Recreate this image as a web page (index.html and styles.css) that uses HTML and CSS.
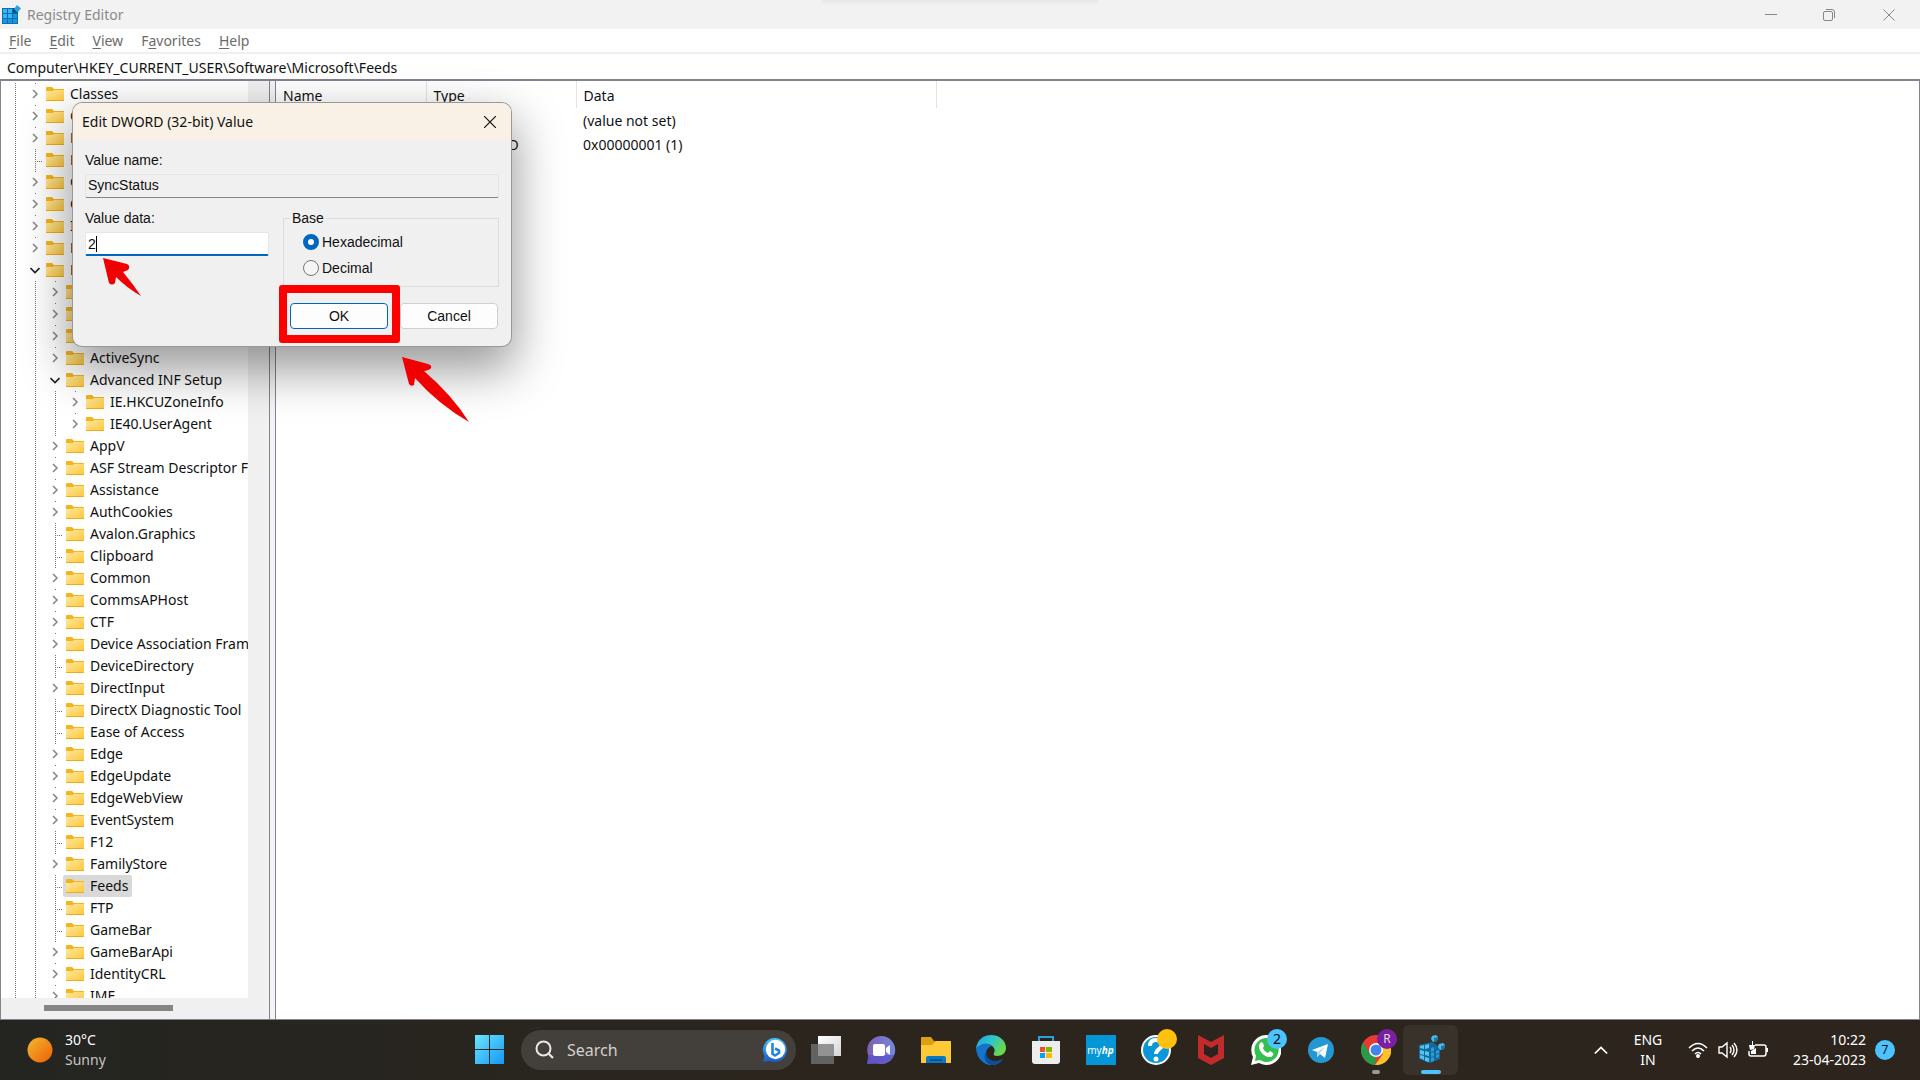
FILE: index.html
```html
<!DOCTYPE html>
<html lang="en">
<head>
<meta charset="utf-8">
<title>Registry Editor</title>
<link rel="stylesheet" href="styles.css">
</head>
<body>
<svg class="defs" aria-hidden="true">
  <defs>
    <linearGradient id="folder-fill" x1="0" y1="0" x2="1" y2="1"><stop offset="0" stop-color="#ffe9a2"/><stop offset="1" stop-color="#fdc638"/></linearGradient>
    <symbol id="folder" viewBox="0 0 18 14"><path d="M0 1a1 1 0 0 1 1-1h5l2 2h10v3H0z" fill="#f5b41c"/><path d="M0 4h7l1-1h10v11H0z" fill="url(#folder-fill)"/><path d="M0 13h18v1H0z" fill="#f0ac18"/></symbol>
    <symbol id="closed" viewBox="0 0 10 10"><path d="M3 1l4 4-4 4" fill="none" stroke="#858585" stroke-width="1.5"/></symbol>
    <symbol id="open" viewBox="0 0 10 10"><path d="M.5 3L5 7.500 9.500 3" fill="none" stroke="#222" stroke-width="1.600"/></symbol>
  </defs>
</svg>

<div class="screen">
<main class="window">
  <header class="titlebar">
    <svg class="app-icon" viewBox="0 0 20 20"><path d="M0 3h16v16H0z" fill="#0a6fb8"/><path d="M1 4h4v4H1zM6 4h4v4H6zM1 9h4v4H1zM6 9h4v4H6z" fill="#39b5ec"/><path d="M11 9h4v4h-4zM1 14h4v4H1zM6 14h4v4H6zM11 14h4v4h-4z" fill="#1e95d8"/><path d="M11 3h5v5h-5z" fill="#0b4f8a"/><path d="M15 0l4 3.500-3.500 4L12 4z" fill="#2aa2e0"/></svg>
    <h1>Registry Editor</h1>
    <div class="caption-buttons">
      <button aria-label="Minimize"><svg viewBox="0 0 12 12"><path d="M0 5.500h12" /></svg></button>
      <button aria-label="Restore"><svg viewBox="0 0 12 12"><rect x=".5" y="2.500" width="9" height="9" rx="1.500"/><path d="M3 .5h6a2.500 2.500 0 0 1 2.500 2.500v6"/></svg></button>
      <button aria-label="Close"><svg viewBox="0 0 12 12"><path d="M.5.500l11 11M11.500.500l-11 11"/></svg></button>
    </div>
  </header>
  <nav class="menubar">
    <button><u>F</u>ile</button><button><u>E</u>dit</button><button><u>V</u>iew</button><button>F<u>a</u>vorites</button><button><u>H</u>elp</button>
  </nav>
  <div class="address"><input type="text" aria-label="Address" value="Computer\HKEY_CURRENT_USER\Software\Microsoft\Feeds"></div>

  <div class="panes">
    <section class="tree-pane" aria-label="Keys">
      <ul class="tree" id="tree"></ul>
      <div class="vscroll"></div>
      <div class="hscroll"><div class="thumb"></div></div>
    </section>
    <section class="list-pane" aria-label="Values">
      <table>
        <thead><tr><th class="col">Name</th><th class="col">Type</th><th class="col-data">Data</th></tr></thead>
        <tbody>
          <tr><td>(Default)</td><td>REG_SZ</td><td>(value not set)</td></tr>
          <tr><td>SyncStatus</td><td>REG_DWORD</td><td>0x00000001 (1)</td></tr>
        </tbody>
      </table>
    </section>
  </div>
</main>

<footer class="taskbar">
  <div class="weather">
    <svg viewBox="0 0 26 26"><defs><linearGradient id="sun" x1="0" y1="0" x2="1" y2="1"><stop offset=".1" stop-color="#f0b02c"/><stop offset=".8" stop-color="#f0700c"/></linearGradient></defs><circle cx="13" cy="13" r="12.500" fill="url(#sun)"/></svg>
    <div><div>30°C</div><div class="dim">Sunny</div></div>
  </div>

  <div class="apps">
    <button class="start" aria-label="Start"><svg viewBox="0 0 30 30"><defs><linearGradient id="win" x1="0" y1="0" x2="1" y2="1"><stop offset="0" stop-color="#6ee4ff"/><stop offset="1" stop-color="#1199f5"/></linearGradient></defs><path d="M0 0h14v14H0zM15 0h14v14H15zM0 15h14v14H0zM15 15h14v14H15z" fill="url(#win)"/></svg></button>
    <label class="search">
      <svg class="lens" viewBox="0 0 20 20"><circle cx="8.500" cy="8.500" r="7" fill="none" stroke="#e8e8e8" stroke-width="2"/><path d="M13.500 13.500l4.500 4.500" stroke="#e8e8e8" stroke-width="2.200"/></svg>
      <input type="text" placeholder="Search" aria-label="Search">
      <svg class="bing" viewBox="0 0 26 26"><defs><linearGradient id="bing" x1="0" y1="0" x2="0" y2="1"><stop offset="0" stop-color="#42c4f5"/><stop offset="1" stop-color="#1c58c8"/></linearGradient></defs><path d="M13 1a12 12 0 1 1-5 23l-7 1 1.500-6A12 12 0 0 1 13 1z" fill="url(#bing)"/><circle cx="13.500" cy="12.500" r="9.700" fill="#fff"/><path d="M10.500 6v11l2.500 1.500 4-2.500v-2.500l-4-2" fill="none" stroke="#2184dd" stroke-width="2.600" stroke-linejoin="round"/></svg>
    </label>
    <button class="app" aria-label="Task view"><svg viewBox="0 0 30 30"><defs><linearGradient id="tv" x1="0" y1="0" x2="1" y2="1"><stop offset="0" stop-color="#fff"/><stop offset="1" stop-color="#d5d5d5"/></linearGradient></defs><path d="M7 1h23v20H7z" fill="url(#tv)"/><path d="M0 9h23v20H0z" fill="#626262"/><path d="M7 9h16v12H7z" fill="#929292"/></svg></button>
    <button class="app" aria-label="Chat"><svg viewBox="0 0 30 30"><defs><linearGradient id="chat" x1="0" y1="0" x2="1" y2="0"><stop offset="0" stop-color="#7f5fb0"/><stop offset="1" stop-color="#7288e0"/></linearGradient></defs><path d="M15 1a14 14 0 1 1-5 27l-9 1 2-7A14 14 0 0 1 15 1z" fill="url(#chat)"/><path d="M2 20h26q-4 9-13 9H1z" fill="#5952c4" opacity=".75"/><rect x="7" y="9" width="12" height="12" rx="2" fill="#fff"/><path d="M20 13l4-3v10l-4-3z" fill="#fff"/></svg></button>
    <button class="app" aria-label="File Explorer"><svg viewBox="0 0 30 30"><path d="M0 3a1 1 0 0 1 1-1h9l3 4h17v8H0z" fill="#dd9f14"/><path d="M0 10h11l4-4h14a1 1 0 0 1 1 1v21H0z" fill="#fdc936"/><path d="M5 28v-5q0-2 2-2h16q2 0 2 2v5z" fill="#0b78c4"/><path d="M9 25h12" stroke="#055590" stroke-width="2"/></svg></button>
    <button class="app" aria-label="Edge"><svg viewBox="0 0 30 30"><defs><linearGradient id="edge" x1="0" y1="0" x2="1" y2=".5"><stop offset="0" stop-color="#249ce0"/><stop offset=".5" stop-color="#2dc4d0"/><stop offset="1" stop-color="#6bd94a"/></linearGradient></defs><path d="M0 14C1 5 7 0 15 0c9 0 15 6 15 13 0 5-4 8-9 8-3 0-4-1-3-3 4-7-10-14-18-4z" fill="url(#edge)"/><path d="M0 14c5-6 12-7 16-3-6 1-8 9-3 13 4 4 10 2 14 0C20 35 2 31 0 14z" fill="#1474ca"/><path d="M10 17c0 8 8 12 17 7-3 5-8 6-12 6-6-2-8-9-5-13z" fill="#0b4ea0"/></svg></button>
    <button class="app" aria-label="Microsoft Store"><svg viewBox="0 0 30 30"><path d="M8 8V2h14v6" fill="none" stroke="#28a0e4" stroke-width="2"/><path d="M1 6h28v20a3 3 0 0 1-3 3H4a3 3 0 0 1-3-3z" fill="#ededed"/><path d="M9 12h5v5H9z" fill="#f25022"/><path d="M15 12h6v5h-6z" fill="#7fba00"/><path d="M9 18h5v5H9z" fill="#00a4ef"/><path d="M15 18h6v5h-6z" fill="#ffb900"/></svg></button>
    <button class="app"><span class="myhp">my<b>hp</b></span></button>
    <button class="app" aria-label="Help"><svg viewBox="0 0 30 30"><circle cx="15" cy="15" r="14" fill="#0a96d8" stroke="#fff" stroke-width="2"/><path d="M9 11q0-6 6-6t6 5c0 4-6 4-6 9" fill="none" stroke="#fff" stroke-width="4"/><circle cx="15" cy="24" r="2.500" fill="#fff"/></svg><span class="badge amber"></span></button>
    <button class="app" aria-label="McAfee"><svg viewBox="0 0 30 30"><path d="M2 0l13 7 13-7v23l-13 7-13-7z" fill="#c22a2c"/><path d="M8 9l7 4 7-4v10l-7 4-7-4z" fill="#2a241e"/></svg></button>
    <button class="app" aria-label="WhatsApp"><svg viewBox="0 0 30 30"><path d="M15 0a15 15 0 1 1-7 28l-8 2 2-8A15 15 0 0 1 15 0z" fill="#fff"/><path d="M15 3a12 12 0 1 1-6 22l-5 1 1-5A12 12 0 0 1 15 3z" fill="#35bf4e"/><path d="M9 8c1-1 2-1 3 0l1 3-1 2c1 3 3 4 5 5l2-2 3 2c1 1 0 3-2 4-6 1-13-6-12-12z" fill="#fff"/></svg><span class="badge blue">2</span></button>
    <button class="app" aria-label="Telegram"><svg viewBox="0 0 30 30"><circle cx="15" cy="15" r="13" fill="#2498d3"/><path d="M6 15l16-6-3 14-5-4-3 3v-5z" fill="#fff"/><path d="M11 17l8-5-5 6-3 4z" fill="#b8d8ec"/></svg></button>
    <button class="app running" aria-label="Chrome"><svg viewBox="0 0 30 30"><circle cx="15" cy="15" r="15" fill="#e53b30"/><path d="M2 7.500L9 19l6 3-1 8A15 15 0 0 1 2 7.500z" fill="#279c4c"/><path d="M15 8h13.500A15 15 0 0 1 14 30l8-11z" fill="#fbc22d"/><circle cx="15" cy="15" r="7" fill="#fff"/><circle cx="15" cy="15" r="5.500" fill="#4285e8"/></svg><span class="badge purple">R</span></button>
    <button class="app active" aria-label="Registry Editor"><svg viewBox="0 0 30 30"><path d="M3 10l13-3 8 5v12l-10 4-11-4z" fill="#116a9f"/><path d="M4 11l4-1v4l-4-1zM9 10l4-1v4l-4 1zM4 15l4 1v4l-4-1zM9 16l4 1v4l-4-1zM4 20l4 1v4l-4-2zM9 22l4 1v4l-4-1z" fill="#57c3ed"/><path d="M15 13l3-1v4l-3 1zM20 16l3-1v3l-3 1zM15 18l3-1v4l-3 1zM20 20l3-1v3l-3 1zM15 23l3-1v4l-3 1z" fill="#2e9bd0"/><path d="M16 1l4-1 2 2-1 4-4 1-2-3zM23 9l4-1 2 2-1 4-4 1-2-3z" fill="#4cbcea"/><path d="M18 3l4-1-1 4-3 1zM25 11l4-1-1 4-3 1z" fill="#1679ad"/></svg></button>
  </div>

  <div class="tray">
    <button class="chevron" aria-label="Show hidden icons"><svg viewBox="0 0 16 10"><path d="M1 9l7-7 7 7" fill="none" stroke="#fff" stroke-width="2"/></svg></button>
    <div class="lang"><div>ENG</div><div>IN</div></div>
    <div class="status">
      <svg viewBox="0 0 20 18"><g fill="none" stroke="#fff" stroke-width="1.500"><path d="M1 7q9-9 18 0M4 10q6-6 12 0M7 13q3-3 6 0"/></g><circle cx="10" cy="15" r="2" fill="#fff"/></svg>
      <svg viewBox="0 0 20 18"><g fill="none" stroke="#fff" stroke-width="1.400"><path d="M1 6h3l5-4v14l-5-4H1zM12 6q2 3 0 6M14 4q4 5 0 10M16 2q6 7 0 14"/></g></svg>
      <svg viewBox="0 0 20 18"><path d="M7 4h9q2 0 2 2v6q0 3-2 3H3q-2 0-2-2v-3" fill="none" stroke="#fff" stroke-width="1.500"/><path d="M18 7h2v4h-2zM4 0v4H1l1 5 4-1 1-4H5V0zM3 10l5-3v6H3z" fill="#fff"/></svg>
    </div>
    <div class="clock"><div>10:22</div><div>23-04-2023</div></div>
    <span class="count">7</span>
  </div>
</footer>

<form class="dialog" role="dialog" aria-labelledby="dialog-title">
  <header class="dialog-title"><h2 id="dialog-title">Edit DWORD (32-bit) Value</h2><button type="button" aria-label="Close"><svg viewBox="0 0 12 12"><path d="M0 0l12 12M12 0L0 12"/></svg></button></header>
  <div class="dialog-body">
    <label for="value-name">Value name:</label>
    <input class="field" id="value-name" type="text" value="SyncStatus" readonly>
    <div class="middle">
      <div class="data"><label for="value-data">Value data:</label><div class="field entry"><input id="value-data" type="text" value="2" size="1"><i class="caret"></i></div></div>
      <fieldset><legend>Base</legend>
        <label class="choice"><input type="radio" name="base" checked>Hexadecimal</label>
        <label class="choice"><input type="radio" name="base">Decimal</label>
      </fieldset>
    </div>
    <div class="actions"><button class="ok" type="submit">OK<i class="mark"></i></button><button type="button">Cancel</button></div>
  </div>
  <svg class="arrow arrow-field" viewBox="0 0 39 38"><path d="M0 0l24 6q4 2 1 6l-5 2q10 12 18 24-14-8-25-19l-1 6q-3 3-6 0z" fill="#f00000"/></svg>
  <svg class="arrow arrow-ok" viewBox="0 0 68 66"><path d="M0 0l26 7q4 1 3 4-1 2-7 3Q50 38 67 65 36 47 13 21l-1 7q-3 2-5-1z" fill="#f00000"/></svg>
</form>
</div>
<script src="tree.js"></script>
</body>
</html>
```
FILE: tree.js
```js
// Each key: [name, depth, state] where state is "closed", "open" or "leaf".
const keys = [
  ["Classes", 1, "closed"], ["C", 1, "closed"], ["D", 1, "closed"], ["E", 1, "leaf"],
  ["G", 1, "closed"], ["G", 1, "closed"], ["I", 1, "closed"], ["M", 1, "closed"], ["M", 1, "open"],
  ["", 2, "closed"], ["", 2, "closed"], ["", 2, "closed"],
  ["ActiveSync", 2, "closed"], ["Advanced INF Setup", 2, "open"],
  ["IE.HKCUZoneInfo", 3, "closed"], ["IE40.UserAgent", 3, "closed"],
  ["AppV", 2, "closed"], ["ASF Stream Descriptor File", 2, "closed"], ["Assistance", 2, "closed"],
  ["AuthCookies", 2, "closed"], ["Avalon.Graphics", 2, "leaf"], ["Clipboard", 2, "leaf"],
  ["Common", 2, "closed"], ["CommsAPHost", 2, "closed"], ["CTF", 2, "closed"],
  ["Device Association Framework", 2, "closed"], ["DeviceDirectory", 2, "leaf"],
  ["DirectInput", 2, "closed"], ["DirectX Diagnostic Tool", 2, "leaf"], ["Ease of Access", 2, "leaf"],
  ["Edge", 2, "closed"], ["EdgeUpdate", 2, "closed"], ["EdgeWebView", 2, "closed"],
  ["EventSystem", 2, "closed"], ["F12", 2, "leaf"], ["FamilyStore", 2, "closed"],
  ["Feeds", 2, "leaf"], ["FTP", 2, "leaf"], ["GameBar", 2, "leaf"], ["GameBarApi", 2, "closed"],
  ["IdentityCRL", 2, "closed"], ["IME", 2, "closed"]
];
document.getElementById("tree").innerHTML = keys.map(([name, depth, state]) => {
  const guides = '<i class="guide"></i>'.repeat(depth);
  const mark = state === "leaf" ? "" : `<svg><use href="#${state}"/></svg>`;
  const selected = name === "Feeds" ? " selected" : "";
  return `<li>${guides}<span class="node ${state}">${mark}</span>` +
    `<span class="key${selected}"><svg class="folder"><use href="#folder"/></svg>${name}</span></li>`;
}).join("");
```
FILE: styles.css
```css
* { box-sizing: border-box; }
body { margin: 0; font: 14px/22px "Noto Sans", "Open Sans", sans-serif; color: #111; background: #fff; }
h1, h2 { margin: 0; font: inherit; }
button, input { font: inherit; color: inherit; border: 0; padding: 0; margin: 0; background: none; outline: 0; }
svg { display: block; flex: none; }
.defs { position: absolute; width: 0; height: 0; }
.screen { position: relative; height: 100vh; display: flex; flex-direction: column; overflow: hidden; }
.window { flex: 1; min-height: 0; display: flex; flex-direction: column; }

.titlebar { display: flex; align-items: center; height: 29px; padding-left: 2px; background: linear-gradient(#e6e6e6, #f2f2f2) center top / 276px 5px no-repeat #f2f2f2; color: #8a8a8a; }
.app-icon { width: 20px; height: 20px; margin-right: 5px; }
.caption-buttons { display: flex; margin-left: auto; }
.caption-buttons button { width: 58px; height: 29px; display: grid; place-items: center; }
.caption-buttons svg { width: 12px; height: 12px; fill: none; stroke: #888; }
.caption-buttons button:last-child { width: 62px; }

.menubar { display: flex; gap: 18px; height: 25px; padding: 1px 0 0 9px; color: #6b6b6b; border-bottom: 2px solid #f0f0f0; }
.menubar u { text-underline-offset: 2px; }
.address { height: 27px; padding: 3px 7px 0; border-bottom: 2px solid #828290; }
.address input { width: 100%; height: 22px; display: block; }

.panes { flex: 1; min-height: 0; display: flex; gap: 5px; background: #f4f4f4; border-bottom: 1px solid #828290; }
.tree-pane { width: 270px; display: grid; grid-template-columns: minmax(0, 1fr) 21px; grid-template-rows: minmax(0, 1fr) 21px; border: solid #828290; border-width: 0 1px; background: #fff; }
.tree { list-style: none; margin: 0; padding: 2px 0 0; overflow: hidden; }
.tree li { display: flex; height: 22px; white-space: nowrap; }
.guide { flex: none; width: 20px; background: repeating-linear-gradient(#777 0 1px, transparent 1px 2px) 14px 0 / 1px 100% no-repeat; }
.node { flex: none; width: 22px; display: grid; place-items: center start; padding-left: 9px; }
.node svg { width: 10px; height: 10px; }
.node.closed { background: linear-gradient(#777, #777) 14px 0 / 1px 1px no-repeat; }
.node.leaf { background: repeating-linear-gradient(#777 0 1px, transparent 1px 2px) 14px 0 / 1px 100% no-repeat, repeating-linear-gradient(90deg, #777 0 1px, transparent 1px 2px) 14px 12px / 8px 1px no-repeat; }
.key { display: flex; align-items: center; gap: 6px; padding: 0 4px 0 3px; border-radius: 2px; }
.key.selected { background: #d9d9d9; }
.folder { width: 18px; height: 14px; }
.vscroll { background: #f0f0f0; }
.hscroll { grid-column: 1 / 3; background: #f0f0f0; padding: 7px 0 0 43px; }
.thumb { width: 129px; height: 6px; background: #858585; }

.list-pane { flex: 1; border: solid #828290; border-width: 0 1px; background: #fff; }
table { border-collapse: collapse; table-layout: fixed; width: 661px; }
th { height: 27px; padding: 2px 7px 0; font-weight: 400; text-align: left; border-right: 1px solid #e3e3e3; }
td { height: 24px; padding: 1px 7px 0; white-space: nowrap; }
.col { width: 150px; }

.dialog { position: absolute; left: 73px; top: 103px; width: 438px; border-radius: 9px; background: #f0f0f0; box-shadow: 0 0 0 1px #999, 0 20px 48px 4px rgba(0, 0, 0, .4); font: 14px/16px "Liberation Sans", Arial, sans-serif; }
.dialog-title { display: flex; justify-content: space-between; height: 37px; padding: 0 9px; align-items: center; border-radius: 9px 9px 0 0; background: #f9f1e6; font: 14px/22px "Noto Sans", "Open Sans", sans-serif; }
.dialog-title button { width: 24px; height: 24px; display: grid; place-items: center; }
.dialog-title svg { width: 12px; height: 12px; stroke: #111; stroke-width: 1.200; }
.dialog-body { padding: 12px 12px 17px; }
.dialog-body label { display: block; }
.field { display: block; width: 100%; height: 24px; margin-top: 6px; padding: 0 2px 2px; border: 1px solid #e6e6e6; border-bottom-color: #868686; border-radius: 2px; }
.middle { display: flex; justify-content: space-between; margin-top: 12px; }
.data { width: 184px; }
.entry { display: flex; align-items: center; background: #fff; border-bottom: 2px solid #0067c0; padding: 0 2px; }
.entry input { width: 8px; }
.caret { width: 1px; height: 16px; background: #000; }
fieldset { width: 216px; height: 77px; margin: 0; padding: 3px 19px 0; border: 1px solid #dcdcdc; }
legend { margin-left: -13px; padding: 0 2px; }
.dialog-body .choice { display: flex; align-items: center; gap: 3px; height: 26px; }
.choice input { appearance: none; width: 16px; height: 16px; border: 1px solid #777; border-radius: 50%; background: #f5f5f5; }
.choice input:checked { border: 5px solid #0067c0; background: #fff; }
.actions { display: flex; justify-content: flex-end; gap: 12px; margin: 16px 1px 0 0; }
.actions button { position: relative; width: 98px; height: 26px; border: 1px solid #d0d0d0; border-radius: 4px; background: #fdfdfd; }
.actions .ok { z-index: 1; border-color: #0067c0; }
.mark { position: absolute; inset: -19px -13px -15px -12px; border: 8px solid #f00; border-radius: 3px; pointer-events: none; }
.arrow { position: absolute; pointer-events: none; overflow: visible; }
.arrow-field { left: 30px; top: 155px; width: 39px; height: 38px; }
.arrow-ok { left: 329px; top: 254px; width: 68px; height: 66px; }

.taskbar { flex: none; display: flex; align-items: center; height: 60px; color: #fff; background: linear-gradient(90deg, #242521, #2b251e 40%, #2d251d); line-height: 20px; }
.weather { flex: none; display: flex; align-items: center; gap: 12px; padding-left: 27px; width: 463px; }
.weather svg { width: 26px; height: 26px; }
.dim { color: #c4c4c4; }
.apps { display: flex; align-items: center; }
.start { width: 58px; }
.start svg { width: 30px; height: 30px; margin-left: 12px; }
.search { display: flex; align-items: center; width: 275px; height: 40px; padding: 0 8px 0 14px; border-radius: 20px; background: #43403b; font-size: 16px; margin-right: 2px; }
.search input { flex: 1; min-width: 0; margin-left: 12px; }
.search input::placeholder { color: #d2d0ce; opacity: 1; }
.lens { width: 20px; height: 20px; }
.bing { width: 26px; height: 26px; }
.app { position: relative; width: 55px; height: 50px; display: grid; place-items: center; }
.app svg { width: 30px; height: 30px; }
.active { background: #39322b; border-radius: 6px; }
.active::after, .running::after { content: ""; position: absolute; bottom: 1px; left: 24px; width: 8px; height: 4px; border-radius: 2px; background: #999; }
.active::after { left: 18px; width: 20px; background: #4cc2ff; }
.badge { position: absolute; top: 4px; left: 29px; width: 20px; height: 20px; border-radius: 50%; font-size: 14px; line-height: 20px; text-align: center; }
.amber { background: #ffc010; }
.blue { background: #4cc2ff; color: #111; }
.purple { background: #7b1fa2; color: #ddd; font-size: 12px; }
.myhp { width: 30px; height: 30px; background: #0496d6; font-size: 10px; line-height: 30px; text-align: center; }
.myhp b { font-style: italic; }
.tray { display: flex; align-items: center; margin-left: auto; padding-right: 25px; }
.chevron svg { width: 14px; height: 10px; }
.lang { width: 80px; text-align: center; }
.status { display: flex; gap: 10px; }
.status svg { width: 20px; height: 18px; }
.clock { width: 98px; text-align: right; }
.count { width: 20px; height: 20px; margin-left: 9px; border-radius: 50%; background: #4cc2ff; color: #111; font-size: 12px; text-align: center; }
```
